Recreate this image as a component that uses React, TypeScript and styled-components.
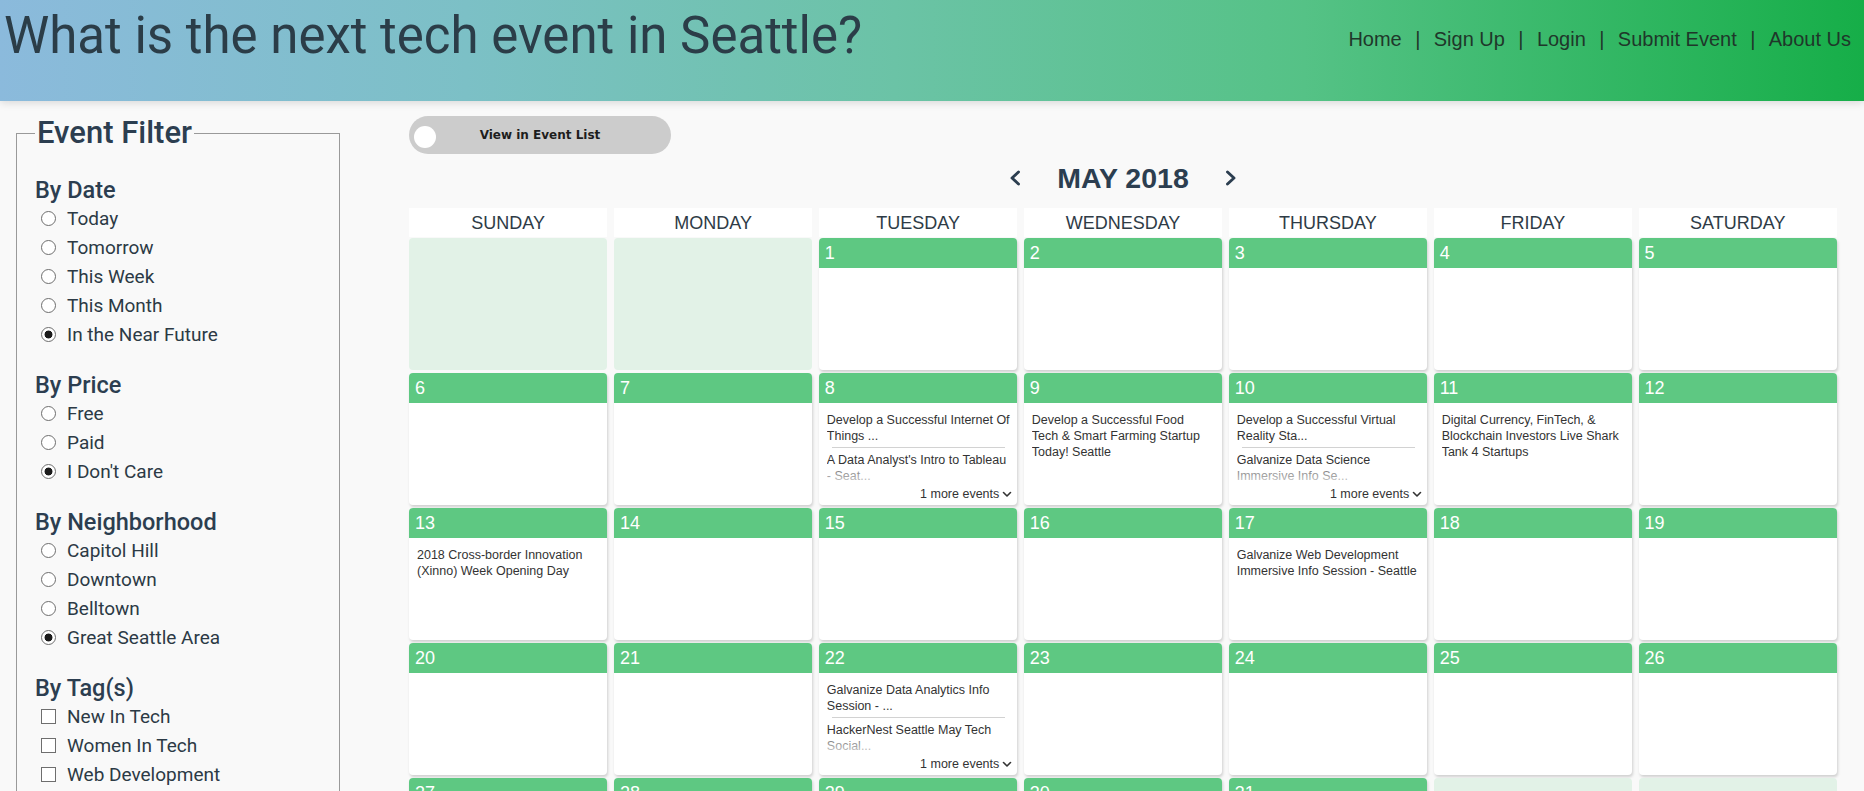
import React from "react";
import styled, { createGlobalStyle, css } from "styled-components";

const GlobalStyle = createGlobalStyle`
  * { box-sizing: border-box; }
  html, body { margin: 0; padding: 0; }
  body {
    background: #f9f9f9;
    font-family: "Liberation Sans", Arial, sans-serif;
    color: #2c3e50;
  }
  ::-webkit-scrollbar { width: 0; height: 0; }
`;

const Header = styled.header`
  position: relative;
  z-index: 1;
  display: flex;
  justify-content: space-between;
  align-items: flex-start;
  height: 101px;
  padding: 0 13px 0 4px;
  background: linear-gradient(90deg, #8bbadc 0%, #7cc0c6 25%, #6bc3a6 48%, #55c286 70%, #16ae48 100%);
  box-shadow: 0 2px 8px rgba(0, 0, 0, 0.13);
`;

const Title = styled.h1`
  margin: 0;
  padding-top: 10px;
  font-family: Roboto, "Liberation Sans", sans-serif;
  font-weight: 400;
  font-size: 51px;
  line-height: 1;
  color: #2b3d48;
`;

const Nav = styled.nav`
  display: flex;
  margin-top: 27px;
  font-family: "Liberation Sans", Arial, sans-serif;
  font-size: 20px;
  line-height: 24px;
  color: #1f372a;
`;

const NavLink = styled.a`
  color: inherit;
  text-decoration: none;
`;

const NavSep = styled.span`
  margin: 0 13.4px;
`;

const Layout = styled.div`
  display: grid;
  grid-template-columns: 409px 1fr;
  padding-right: 27px;
`;

const Sidebar = styled.aside`
  padding: 13px 0 0 16px;
`;

const Fieldset = styled.fieldset`
  margin: 0;
  width: 324px;
  border: 1px solid #9a9a9a;
  padding: 2px 18px 24px;
  font-family: Roboto, "Liberation Sans", sans-serif;
  color: #2c3e50;
`;

const Legend = styled.legend`
  padding: 0 2px;
  font-size: 31px;
  line-height: 38px;
  font-weight: 500;
`;

const FilterGroup = styled.div`
  margin-top: 22px;
`;

const GroupTitle = styled.h3`
  margin: 0;
  font-size: 23.5px;
  line-height: 28px;
  font-weight: 500;
`;

const Option = styled.label`
  display: flex;
  align-items: center;
  gap: 11px;
  height: 29px;
  padding-left: 6px;
  font-size: 19px;
  color: #2c3a45;
`;

const markBase = css`
  appearance: none;
  -webkit-appearance: none;
  flex: none;
  margin: 0;
  width: 15px;
  height: 15px;
  border: 1px solid #6e6e6e;
  background: #fff;
`;

const Radio = styled.input.attrs({ type: "radio" })`
  ${markBase}
  border-radius: 50%;
  &:checked {
    background: radial-gradient(circle, #1b1b1b 0 3.6px, #fff 4.3px);
  }
`;

const Checkbox = styled.input.attrs({ type: "checkbox" })`
  ${markBase}
  border-radius: 0;
`;

const Main = styled.main`
  padding-top: 15px;
`;

const Toggle = styled.button`
  display: flex;
  align-items: center;
  width: 262px;
  height: 38px;
  padding: 0 5px;
  border: 0;
  border-radius: 19px;
  background: #cccccc;
  cursor: pointer;
`;

const Knob = styled.span`
  flex: none;
  width: 22px;
  height: 22px;
  margin-top: 3px;
  border-radius: 50%;
  background: #fff;
`;

const ToggleLabel = styled.span`
  flex: 1;
  margin-right: 22px;
  text-align: center;
  font-family: "DejaVu Sans", Verdana, sans-serif;
  font-weight: bold;
  font-size: 12px;
  color: #1d1d1d;
`;

const MonthBar = styled.div`
  display: flex;
  justify-content: center;
  align-items: center;
  gap: 36px;
  height: 40px;
  margin-top: 4px;
`;

const MonthTitle = styled.h2`
  margin: 0;
  font-size: 28.5px;
  font-weight: bold;
  color: #2c3e50;
`;

const ArrowButton = styled.button`
  display: flex;
  padding: 0;
  border: 0;
  background: none;
  color: #2c3e50;
  cursor: pointer;
`;

const WeekHeader = styled.div`
  display: grid;
  grid-template-columns: repeat(7, 1fr);
  column-gap: 6.5px;
  margin-top: 10px;
`;

const WeekDay = styled.div`
  height: 29px;
  background: #fff;
  text-align: center;
  font-size: 18px;
  line-height: 30px;
  color: #2e3b46;
`;

const MonthGrid = styled.div`
  display: grid;
  grid-template-columns: repeat(7, 1fr);
  grid-auto-rows: 132px;
  column-gap: 6.5px;
  row-gap: 3px;
  margin-top: 1px;
`;

const Cell = styled.div<{ $empty?: boolean }>`
  display: flex;
  flex-direction: column;
  overflow: hidden;
  border-radius: 4px;
  background: ${(p) => (p.$empty ? "#e2f2e7" : "#fff")};
  box-shadow: ${(p) => (p.$empty ? "none" : "1px 2px 3px rgba(0, 0, 0, 0.17)")};
`;

const DayNumber = styled.div`
  flex: none;
  height: 30px;
  padding-left: 6px;
  background: #5ec882;
  color: #fff;
  font-size: 18px;
  line-height: 30px;
`;

const CellBody = styled.div`
  flex: 1;
  min-height: 0;
  display: flex;
  flex-direction: column;
  padding: 5px 5px 3px 8px;
`;

const EventList = styled.div<{ $fade?: boolean }>`
  position: relative;
  flex: 1;
  min-height: 0;
  overflow: hidden;
  ${(p) =>
    p.$fade &&
    css`
      &::after {
        content: "";
        position: absolute;
        left: 0;
        right: 0;
        bottom: 0;
        height: 17px;
        background: linear-gradient(rgba(255, 255, 255, 0.35), rgba(255, 255, 255, 0.85));
      }
    `}
`;

const EventItem = styled.div`
  position: relative;
  padding: 4px 0;
  white-space: pre-line;
  font-size: 12.5px;
  line-height: 16px;
  color: #333;
  &:not(:last-child)::after {
    content: "";
    position: absolute;
    left: 5.5px;
    right: 7px;
    bottom: 0;
    height: 1px;
    background: #d2d2d2;
  }
`;

const MoreEvents = styled.div`
  flex: none;
  display: flex;
  justify-content: flex-end;
  align-items: center;
  gap: 3px;
  font-size: 12.5px;
  line-height: 16px;
  color: #333;
`;

type DayEvents = { titles: string[]; more?: number };

const EVENTS: Record<number, DayEvents> = {
  8: {
    titles: ["Develop a Successful Internet Of\nThings ...", "A Data Analyst's Intro to Tableau\n- Seat..."],
    more: 1,
  },
  9: { titles: ["Develop a Successful Food\nTech & Smart Farming Startup\nToday! Seattle"] },
  10: {
    titles: ["Develop a Successful Virtual\nReality Sta...", "Galvanize Data Science\nImmersive Info Se..."],
    more: 1,
  },
  11: { titles: ["Digital Currency, FinTech, &\nBlockchain Investors Live Shark\nTank 4 Startups"] },
  13: { titles: ["2018 Cross-border Innovation\n(Xinno) Week Opening Day"] },
  17: { titles: ["Galvanize Web Development\nImmersive Info Session - Seattle"] },
  22: {
    titles: ["Galvanize Data Analytics Info\nSession - ...", "HackerNest Seattle May Tech\nSocial..."],
    more: 1,
  },
};

const WEEKDAYS = ["SUNDAY", "MONDAY", "TUESDAY", "WEDNESDAY", "THURSDAY", "FRIDAY", "SATURDAY"];

const FILTERS: { title: string; kind: "radio" | "checkbox"; name: string; options: string[]; checked?: string }[] = [
  {
    title: "By Date",
    kind: "radio",
    name: "date",
    options: ["Today", "Tomorrow", "This Week", "This Month", "In the Near Future"],
    checked: "In the Near Future",
  },
  { title: "By Price", kind: "radio", name: "price", options: ["Free", "Paid", "I Don't Care"], checked: "I Don't Care" },
  {
    title: "By Neighborhood",
    kind: "radio",
    name: "hood",
    options: ["Capitol Hill", "Downtown", "Belltown", "Great Seattle Area"],
    checked: "Great Seattle Area",
  },
  { title: "By Tag(s)", kind: "checkbox", name: "tag", options: ["New In Tech", "Women In Tech", "Web Development"] },
];

const NAV = ["Home", "Sign Up", "Login", "Submit Event", "About Us"];

const Chevron = ({ dir }: { dir: "left" | "right" }) => (
  <svg width="12" height="16" viewBox="0 0 12 16" fill="none">
    <polyline
      points={dir === "left" ? "9.5,2 3,8 9.5,14" : "2.5,2 9,8 2.5,14"}
      stroke="currentColor"
      strokeWidth="2.9"
      strokeLinecap="round"
      strokeLinejoin="round"
    />
  </svg>
);

const SmallChevronDown = () => (
  <svg width="10" height="7" viewBox="0 0 10 7" fill="none">
    <polyline points="1.5,1.5 5,5 8.5,1.5" stroke="#333" strokeWidth="1.6" strokeLinecap="round" strokeLinejoin="round" />
  </svg>
);

function buildCells(): (number | null)[] {
  const cells: (number | null)[] = [null, null];
  for (let d = 1; d <= 31; d++) cells.push(d);
  while (cells.length % 7 !== 0) cells.push(null);
  return cells;
}

const DayCell = ({ day }: { day: number | null }) => {
  if (day === null) return <Cell $empty />;
  const ev = EVENTS[day];
  return (
    <Cell>
      <DayNumber>{day}</DayNumber>
      <CellBody>
        {ev && (
          <>
            <EventList $fade={!!ev.more}>
              {ev.titles.map((t) => (
                <EventItem key={t}>{t}</EventItem>
              ))}
            </EventList>
            {ev.more ? (
              <MoreEvents>
                {ev.more} more events <SmallChevronDown />
              </MoreEvents>
            ) : null}
          </>
        )}
      </CellBody>
    </Cell>
  );
};

export default function App() {
  const cells = buildCells();
  return (
    <>
      <GlobalStyle />
      <Header>
        <Title>What is the next tech event in Seattle?</Title>
        <Nav>
          {NAV.map((item, i) => (
            <React.Fragment key={item}>
              {i > 0 && <NavSep>|</NavSep>}
              <NavLink href="#">{item}</NavLink>
            </React.Fragment>
          ))}
        </Nav>
      </Header>
      <Layout>
        <Sidebar>
          <Fieldset>
            <Legend>Event Filter</Legend>
            {FILTERS.map((g) => (
              <FilterGroup key={g.title}>
                <GroupTitle>{g.title}</GroupTitle>
                {g.options.map((o) => (
                  <Option key={o}>
                    {g.kind === "radio" ? (
                      <Radio name={g.name} defaultChecked={g.checked === o} />
                    ) : (
                      <Checkbox name={g.name} />
                    )}
                    {o}
                  </Option>
                ))}
              </FilterGroup>
            ))}
          </Fieldset>
        </Sidebar>
        <Main>
          <Toggle type="button">
            <Knob />
            <ToggleLabel>View in Event List</ToggleLabel>
          </Toggle>
          <MonthBar>
            <ArrowButton type="button" aria-label="previous month">
              <Chevron dir="left" />
            </ArrowButton>
            <MonthTitle>MAY 2018</MonthTitle>
            <ArrowButton type="button" aria-label="next month">
              <Chevron dir="right" />
            </ArrowButton>
          </MonthBar>
          <WeekHeader>
            {WEEKDAYS.map((d) => (
              <WeekDay key={d}>{d}</WeekDay>
            ))}
          </WeekHeader>
          <MonthGrid>
            {cells.map((d, i) => (
              <DayCell key={i} day={d} />
            ))}
          </MonthGrid>
        </Main>
      </Layout>
    </>
  );
}
